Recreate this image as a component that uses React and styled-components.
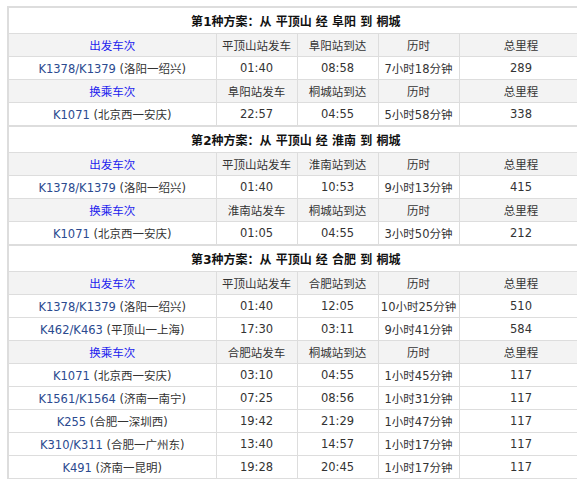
import React from 'react'
import styled, { createGlobalStyle } from 'styled-components'

const Global = createGlobalStyle`
  body { margin: 0; background: #fff; font-family: "DejaVu Sans", "Noto Sans CJK SC", sans-serif; }
`

const Wrap = styled.div`
  padding: 6px 0 0 7px;
`

const Table = styled.table`
  width: 575px;
  table-layout: fixed;
  border-collapse: collapse;
  font-size: 11.5px;
  color: #333;
  border-left: 2px solid #ddd;
`

const Title = styled.td`
  height: 25px;
  padding: 0;
  text-align: center;
  font-weight: bold;
  font-size: 12px;
  color: #111;
  border: 1px solid #ddd;
  border-top: 2px solid #ddd;
`

const Cell = styled.td`
  height: 22px;
  padding: 0;
  text-align: center;
  white-space: nowrap;
  border: 1px solid #ddd;
  background: ${p => (p.head ? '#f3f3f3' : '#fff')};
  color: ${p => (p.blue ? '#2222ee' : '#333')};
`

const Col = styled.col`
  width: ${p => p.w}px;
`

const Train = styled.span`
  color: #2b4a8f;
`

const widths = [208, 81, 81, 81, 124]

const plans = [
  {
    via: '阜阳',
    legs: [
      { label: '出发车次', from: '平顶山', to: '阜阳', rows: [['K1378/K1379', '洛阳一绍兴', '01:40', '08:58', '7小时18分钟', '289']] },
      { label: '换乘车次', from: '阜阳', to: '桐城', rows: [['K1071', '北京西一安庆', '22:57', '04:55', '5小时58分钟', '338']] },
    ],
  },
  {
    via: '淮南',
    legs: [
      { label: '出发车次', from: '平顶山', to: '淮南', rows: [['K1378/K1379', '洛阳一绍兴', '01:40', '10:53', '9小时13分钟', '415']] },
      { label: '换乘车次', from: '淮南', to: '桐城', rows: [['K1071', '北京西一安庆', '01:05', '04:55', '3小时50分钟', '212']] },
    ],
  },
  {
    via: '合肥',
    legs: [
      {
        label: '出发车次', from: '平顶山', to: '合肥',
        rows: [
          ['K1378/K1379', '洛阳一绍兴', '01:40', '12:05', '10小时25分钟', '510'],
          ['K462/K463', '平顶山一上海', '17:30', '03:11', '9小时41分钟', '584'],
        ],
      },
      {
        label: '换乘车次', from: '合肥', to: '桐城',
        rows: [
          ['K1071', '北京西一安庆', '03:10', '04:55', '1小时45分钟', '117'],
          ['K1561/K1564', '济南一南宁', '07:25', '08:56', '1小时31分钟', '117'],
          ['K255', '合肥一深圳西', '19:42', '21:29', '1小时47分钟', '117'],
          ['K310/K311', '合肥一广州东', '13:40', '14:57', '1小时17分钟', '117'],
          ['K491', '济南一昆明', '19:28', '20:45', '1小时17分钟', '117'],
        ],
      },
    ],
  },
]

export default function App() {
  return (
    <Wrap>
      <Global />
      <Table>
        <colgroup>
          {widths.map((w, i) => <Col key={i} w={w} />)}
        </colgroup>
        <tbody>
          {plans.map((plan, i) => (
            <React.Fragment key={i}>
              <tr>
                <Title colSpan={5}>第{i + 1}种方案：从 平顶山 经 {plan.via} 到 桐城</Title>
              </tr>
              {plan.legs.map((leg, j) => (
                <React.Fragment key={j}>
                  <tr>
                    <Cell head blue>{leg.label}</Cell>
                    <Cell head>{leg.from}站发车</Cell>
                    <Cell head>{leg.to}站到达</Cell>
                    <Cell head>历时</Cell>
                    <Cell head>总里程</Cell>
                  </tr>
                  {leg.rows.map((r, k) => (
                    <tr key={k}>
                      <Cell><Train>{r[0]}</Train> ({r[1]})</Cell>
                      <Cell>{r[2]}</Cell>
                      <Cell>{r[3]}</Cell>
                      <Cell>{r[4]}</Cell>
                      <Cell>{r[5]}</Cell>
                    </tr>
                  ))}
                </React.Fragment>
              ))}
            </React.Fragment>
          ))}
        </tbody>
      </Table>
    </Wrap>
  )
}
